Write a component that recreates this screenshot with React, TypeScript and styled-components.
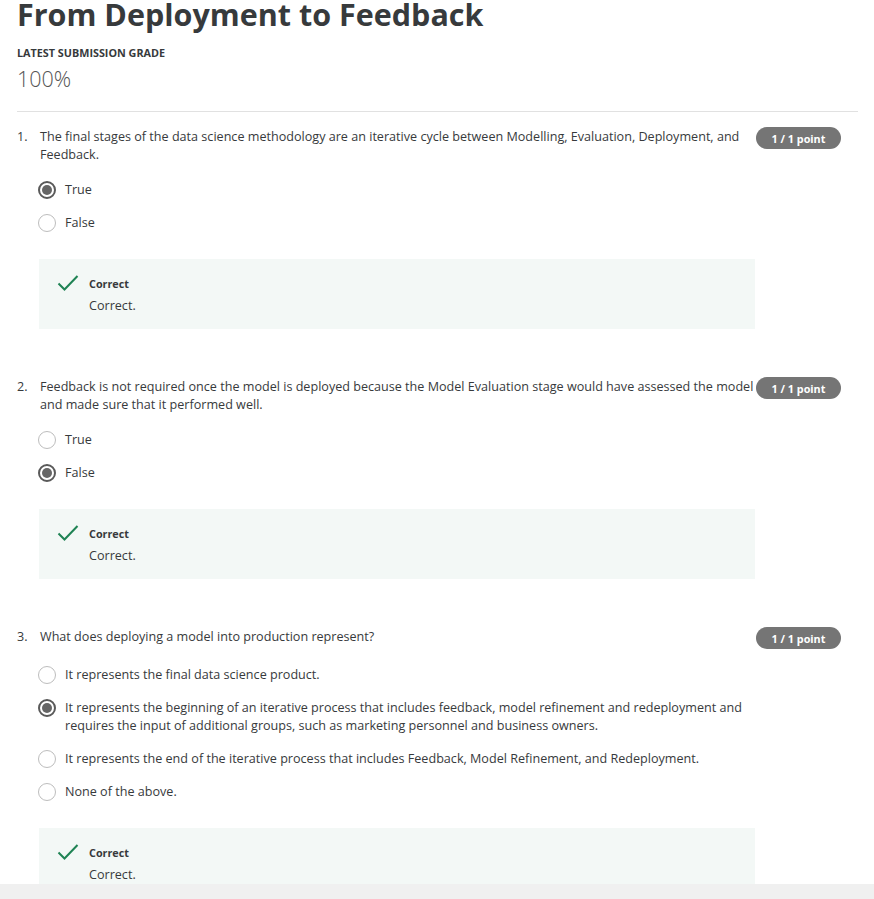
import React from "react"
import styled, { createGlobalStyle } from "styled-components"

const GlobalStyle = createGlobalStyle`
  body {
    margin: 0;
    background: #fff;
    font-family: "Open Sans", "Noto Sans", sans-serif;
    color: #373a3c;
    overflow: hidden;
  }
`

const Page = styled.div`
  padding: 0 16px 40px 17px;
`
const Title = styled.h1`
  margin: -8px 0 0;
  font-size: 30.5px;
  font-weight: 700;
  line-height: 44px;
  color: #373a3c;
`
const GradeLabel = styled.div`
  margin-top: 10px;
  font-size: 10.8px;
  font-weight: 700;
  line-height: 14px;
  color: #373a3c;
`
const GradeValue = styled.div`
  margin-top: 6px;
  font-size: 21.5px;
  font-weight: 300;
  line-height: 26px;
  color: #555;
`
const Divider = styled.hr`
  margin: 19px 0 0;
  border: 0;
  border-top: 1px solid #e1e1e1;
`
const QuestionList = styled.div`
  padding-top: 16px;
`
const Question = styled.div`
  margin-bottom: 49px;
`
const QuestionHead = styled.div`
  display: flex;
  align-items: flex-start;
`
const Number = styled.div`
  width: 23px;
  flex-shrink: 0;
  font-size: 12.6px;
  line-height: 18px;
`
const Prompt = styled.div`
  width: 716px;
  flex-shrink: 0;
  font-size: 12.6px;
  line-height: 18px;
`
const Badge = styled.div`
  margin-top: -1px;
  width: 85px;
  height: 22px;
  border-radius: 11px;
  background: #757575;
  color: #fff;
  font-size: 10.8px;
  font-weight: 700;
  display: flex;
  align-items: center;
  justify-content: center;
`
const Options = styled.div`
  padding-left: 21px;
  margin-top: 17px;
  display: flex;
  flex-direction: column;
  gap: 15px;
`
const Option = styled.label`
  display: flex;
  align-items: flex-start;
  gap: 9px;
  font-size: 12.6px;
  line-height: 18px;
  max-width: 710px;
`
const Radio = styled.span<{ $checked?: boolean }>`
  box-sizing: border-box;
  flex-shrink: 0;
  width: 18px;
  height: 18px;
  border-radius: 50%;
  border: ${(p) => (p.$checked ? "2px solid #5a5a5a" : "1px solid #bdbdbd")};
  display: flex;
  align-items: center;
  justify-content: center;
  &::after {
    content: "";
    display: ${(p) => (p.$checked ? "block" : "none")};
    width: 10px;
    height: 10px;
    border-radius: 50%;
    background: #666;
  }
`
const Feedback = styled.div`
  margin: 27px 0 0 22px;
  width: 716px;
  height: 70px;
  box-sizing: border-box;
  background: #f3f8f6;
  padding: 16px 0 0 18px;
  display: flex;
  gap: 10px;
`
const FeedbackText = styled.div`
  display: flex;
  flex-direction: column;
`
const FeedbackTitle = styled.div`
  font-size: 10.8px;
  font-weight: 700;
  line-height: 18px;
  color: #373a3c;
`
const FeedbackBody = styled.div`
  margin-top: 4px;
  font-size: 12.6px;
  line-height: 18px;
`
const Footer = styled.div`
  position: fixed;
  left: 0;
  right: 0;
  bottom: 0;
  height: 15px;
  background: #f0f0f0;
`

const Check = () => (
  <svg width="22" height="18" viewBox="0 0 22 18" style={{ marginTop: -1 }}>
    <path d="M1.5 9.5 L7.5 15.5 L20.5 2" fill="none" stroke="#1f8354" strokeWidth="2" />
  </svg>
)

type Q = { text: string; options: string[]; answer: number }

const questions: Q[] = [
  {
    text: "The final stages of the data science methodology are an iterative cycle between Modelling, Evaluation, Deployment, and Feedback.",
    options: ["True", "False"],
    answer: 0,
  },
  {
    text: "Feedback is not required once the model is deployed because the Model Evaluation stage would have assessed the model and made sure that it performed well.",
    options: ["True", "False"],
    answer: 1,
  },
  {
    text: "What does deploying a model into production represent?",
    options: [
      "It represents the final data science product.",
      "It represents the beginning of an iterative process that includes feedback, model refinement and redeployment and requires the input of additional groups, such as marketing personnel and business owners.",
      "It represents the end of the iterative process that includes Feedback, Model Refinement, and Redeployment.",
      "None of the above.",
    ],
    answer: 1,
  },
]

export default function App() {
  return (
    <>
      <GlobalStyle />
      <Page>
        <Title>From Deployment to Feedback</Title>
        <GradeLabel>LATEST SUBMISSION GRADE</GradeLabel>
        <GradeValue>100%</GradeValue>
        <Divider />
        <QuestionList>
          {questions.map((q, i) => (
            <Question key={i}>
              <QuestionHead>
                <Number>{i + 1}.</Number>
                <Prompt>{q.text}</Prompt>
                <Badge>1 / 1 point</Badge>
              </QuestionHead>
              <Options>
                {q.options.map((o, j) => (
                  <Option key={j}>
                    <Radio $checked={j === q.answer} />
                    <span>{o}</span>
                  </Option>
                ))}
              </Options>
              <Feedback>
                <Check />
                <FeedbackText>
                  <FeedbackTitle>Correct</FeedbackTitle>
                  <FeedbackBody>Correct.</FeedbackBody>
                </FeedbackText>
              </Feedback>
            </Question>
          ))}
        </QuestionList>
      </Page>
      <Footer />
    </>
  )
}
